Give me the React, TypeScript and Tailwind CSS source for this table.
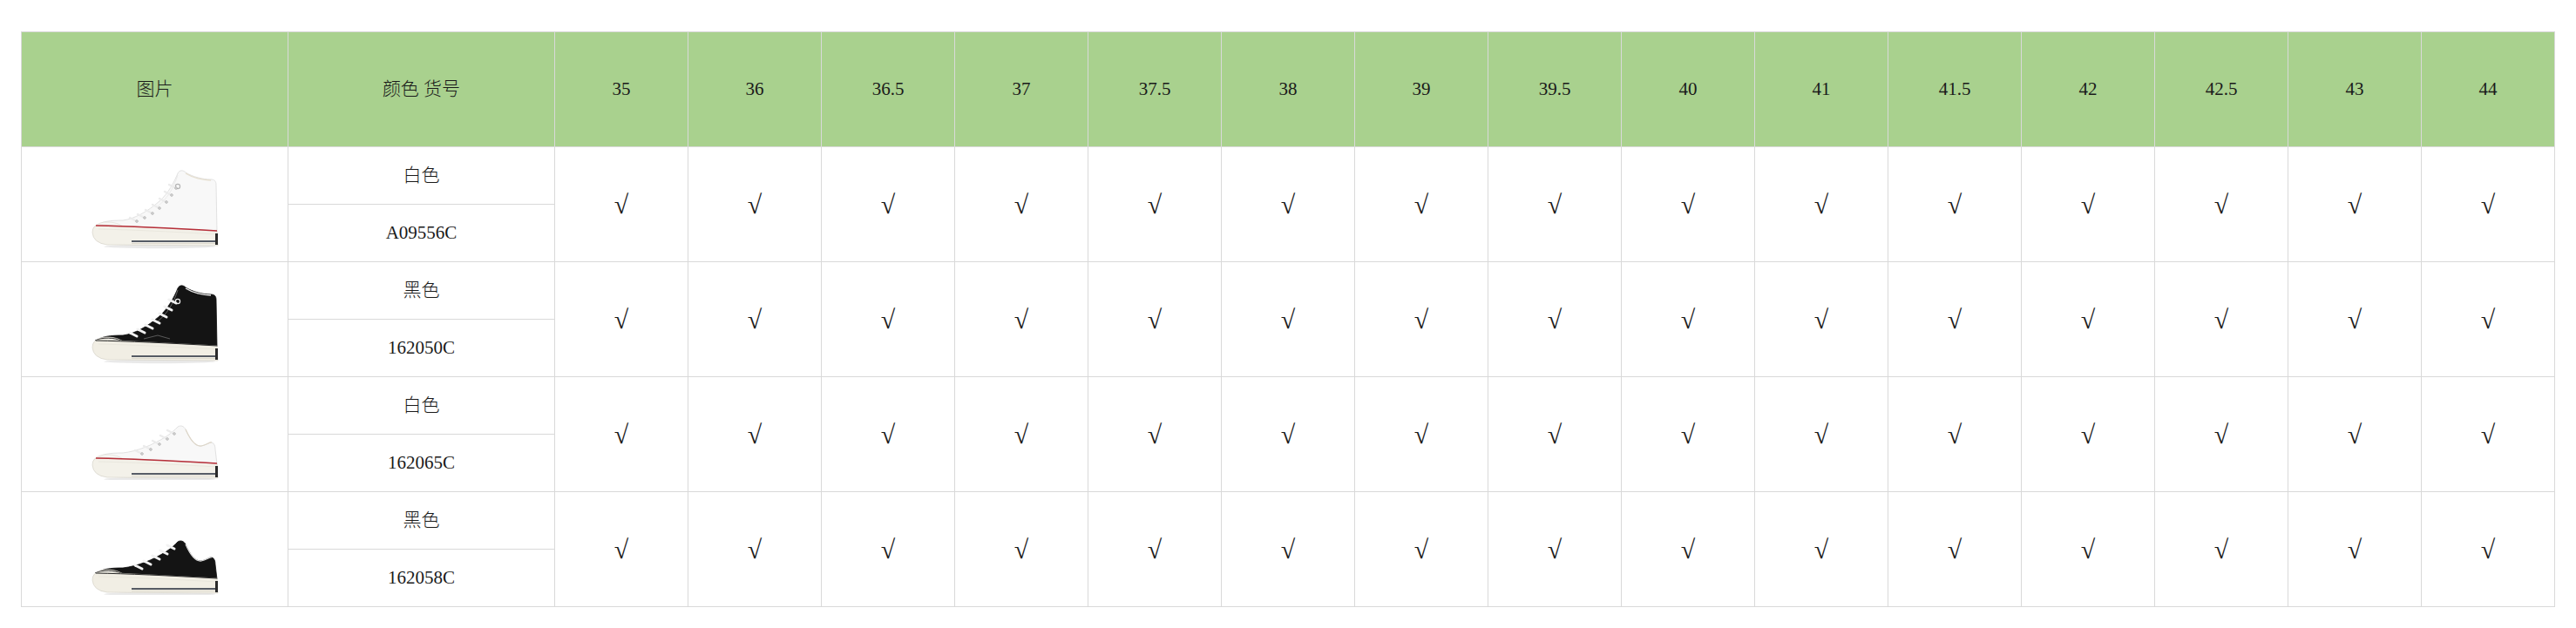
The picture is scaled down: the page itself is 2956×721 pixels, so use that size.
import React from "react";

const sizes = ["35", "36", "36.5", "37", "37.5", "38", "39", "39.5", "40", "41", "41.5", "42", "42.5", "43", "44"];

type Product = { color: string; code: string; high: boolean; dark: boolean };

const products: Product[] = [
  { color: "白色", code: "A09556C", high: true, dark: false },
  { color: "黑色", code: "162050C", high: true, dark: true },
  { color: "白色", code: "162065C", high: false, dark: false },
  { color: "黑色", code: "162058C", high: false, dark: true },
];

function Shoe({ high, dark }: { high: boolean; dark: boolean }) {
  const upper = dark ? "#141414" : "#f8f8f8";
  const upperStroke = dark ? "#0a0a0a" : "#dadada";
  const lace = dark ? "#f2f2f2" : "#ececec";
  // sole geometry: top at toe / heel, bottom
  const t0 = high ? 71 : 74;
  const t1 = high ? 78 : 81;
  const b = high ? 95 : 98;
  const eyelets = high
    ? [
        [50, 66],
        [59, 62],
        [68, 57],
        [76, 51],
        [84, 44],
        [90, 36],
        [95, 28],
      ]
    : [
        [56, 69],
        [66, 64],
        [76, 58],
        [85, 52],
        [93, 46],
      ];
  const upperPath = high
    ? "M8,73 C12,67 24,66 38,66 C52,64 66,56 80,44 C90,35 97,22 101,12 C103,8 107,8 110,11 C118,16 130,19 139,19 C143,19 145,21 145,25 L146,79 Z"
    : "M8,76 C12,70 24,69 38,69 C55,67 72,60 88,50 C94,46 98,42 101,39 C104,37 108,38 110,42 C114,51 120,62 128,61 C134,60 138,56 140,57 C143,58 144,61 144,65 L146,82 Z";
  return (
    <svg width="150" height="100" viewBox="0 0 150 100">
      <ellipse cx="80" cy={b + 1} rx="64" ry="2.2" fill="#e9e9e9" />
      <path d={upperPath} fill={upper} stroke={upperStroke} strokeWidth="0.8" />
      {high && (
        <>
          <path d="M110,12 C118,17 130,20 139,20" fill="none" stroke={dark ? "#e8e8e8" : "#e6dfd0"} strokeWidth="1.4" />
          <path d="M101,14 C96,30 88,42 78,50" fill="none" stroke={dark ? "#9a9a9a" : "#e2e2e2"} strokeWidth="0.6" />
          <circle cx="101" cy="27" r="2.6" fill={dark ? "#141414" : "#f8f8f8"} stroke={dark ? "#f0f0f0" : "#b5b5b5"} strokeWidth="1.2" />
          {dark && <path d="M62,70 L78,66 L92,70" fill="none" stroke="#8a8a8a" strokeWidth="0.6" />}
        </>
      )}
      {!high && (
        <path d="M110,42 C114,51 120,62 128,61 C134,60 138,56 140,57" fill="none" stroke={dark ? "#e0e0e0" : "#ddd6c8"} strokeWidth="1.2" />
      )}
      {eyelets.map(([x, y], i) => (
        <g key={i}>
          <path d={`M${x - 4},${y - 3} L${x + 4},${y + 1}`} stroke={lace} strokeWidth={dark ? 3 : 2.4} strokeLinecap="round" />
          {!dark && <circle cx={x + 4} cy={y + 1} r="1.3" fill="none" stroke="#9c9c9c" strokeWidth="0.7" />}
        </g>
      ))}
      <path
        d={`M4,${t0 + 7} C4,${t0 + 1} 10,${t0 - 3} 20,${t0 - 3} C28,${t0 - 3} 34,${t0 - 1} 38,${t0 + 2} L38,${t0 + 8} Z`}
        fill={dark ? "#f3f1ea" : "#f8f8f6"}
        stroke="#dcd9cf"
        strokeWidth="0.6"
      />
      {dark && <path d={`M6,${t0 + 1} C14,${t0 - 3} 28,${t0 - 3} 38,${t0 + 2}`} fill="none" stroke="#1a1a1a" strokeWidth="0.9" />}
      <path
        d={`M3,${t0 + 9} Q3,${t0} 12,${t0} L146,${t1} L147,${b} L20,${b - 1} Q4,${b - 3} 3,${t0 + 9} Z`}
        fill={dark ? "#f1eee4" : "#f3f1e9"}
        stroke="#d6d3c8"
        strokeWidth="0.7"
      />
      <path d={`M10,${t0 + 5} Q60,${t0 + 6} 146,${t1 + 4}`} fill="none" stroke="#e3e0d6" strokeWidth="0.6" />
      {!dark && <path d={`M7,${t0 + 1} Q60,${t0 + 2} 146,${t1}`} fill="none" stroke="#b72f3a" strokeWidth="1.3" />}
      {dark && <path d={`M7,${t0 + 1} Q60,${t0 + 2} 146,${t1}`} fill="none" stroke="#2a2a2a" strokeWidth="1" />}
      <path d={`M48,${b - 5} L145,${b - 5}`} stroke="#222a3a" strokeWidth="1.6" />
      <path d={`M48,${b - 2.5} L145,${b - 2.5}`} stroke="#d7d3c6" strokeWidth="0.8" />
      <rect x="144" y={t1 + 3} width="3" height={b - t1 - 4} fill="#2a2a2a" />
    </svg>
  );
}

export default function App() {
  const cell = "border border-[#d9d9d9] text-center align-middle";
  return (
    <div
      className="min-h-[721px] bg-white pt-[36px] pl-[24px] text-[21px] leading-none text-[#1a1a1a]"
      style={{ fontFamily: '"Liberation Serif", "Noto Sans CJK SC", serif' }}
    >
      <table className="w-[2907px] table-fixed border-collapse">
        <colgroup>
          <col className="w-[306px]" />
          <col className="w-[306px]" />
          {sizes.map((s) => (
            <col key={s} className="w-[153px]" />
          ))}
        </colgroup>
        <thead>
          <tr className="h-[132px] bg-[#a9d18e]">
            <th className={`${cell} font-light`}>图片</th>
            <th className={`${cell} font-light`}>颜色 货号</th>
            {sizes.map((s) => (
              <th key={s} className={`${cell} font-normal`}>
                {s}
              </th>
            ))}
          </tr>
        </thead>
        <tbody>
          {products.map((p) => (
            <React.Fragment key={p.code}>
              <tr className="h-[66px]">
                <td rowSpan={2} className={cell}>
                  <div className="flex items-center justify-center pt-[4px]">
                    <Shoe high={p.high} dark={p.dark} />
                  </div>
                </td>
                <td className={`${cell} font-light`}>{p.color}</td>
                {sizes.map((s) => (
                  <td key={s} rowSpan={2} className={`${cell} text-[30px]`}>
                    √
                  </td>
                ))}
              </tr>
              <tr className="h-[66px]">
                <td className={cell}>{p.code}</td>
              </tr>
            </React.Fragment>
          ))}
        </tbody>
      </table>
    </div>
  );
}
